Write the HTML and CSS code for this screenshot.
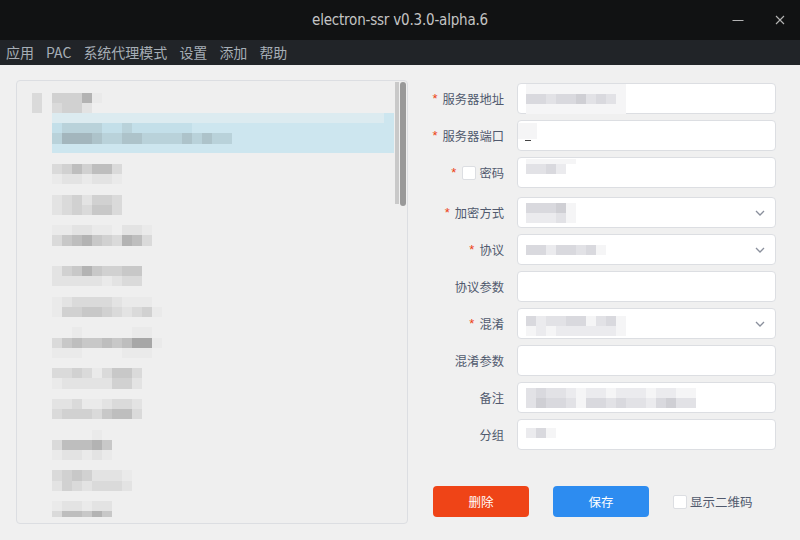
FILE: index.html
```html
<!DOCTYPE html>
<html lang="zh">
<head>
<meta charset="utf-8">
<title>electron-ssr v0.3.0-alpha.6</title>
<link rel="stylesheet" href="styles.css">
</head>
<body>
<header class="titlebar">
  <div></div>
  <div class="title">electron-ssr v0.3.0-alpha.6</div>
  <div class="winctl">
    <span class="wbtn"><svg width="12" height="12" viewBox="0 0 12 12"><line x1="0.5" y1="6.5" x2="11.5" y2="6.5" stroke="#b4b4b4" stroke-width="1"/></svg></span>
    <span class="wbtn close"><svg width="10" height="10" viewBox="0 0 10 10"><path d="M1 1L9 9M9 1L1 9" stroke="#b4b4b4" stroke-width="1.1"/></svg></span>
  </div>
</header>
<nav class="menubar">
  <span class="mi">应用</span><span class="mi">PAC</span><span class="mi">系统代理模式</span><span class="mi">设置</span><span class="mi">添加</span><span class="mi">帮助</span>
</nav>
<main class="main">
  <section class="panel">
    <div class="tree">
      <div class="node-root">
        <div class="mz"><div class="r"><i class="k3"></i></div><div class="r"><i class="k3"></i></div></div>
        <div class="mz"><div class="r"><i class="k4"></i><i class="k4"></i><i class="k4"></i><i class="k7"></i><i class="k1"></i></div><div class="r"><i class="k3"></i><i class="k4"></i><i class="k4"></i><i class="k2"></i></div></div>
      </div>
      <div class="children">
        <div class="selected">
          <div class="r sel-top"></div>
          <div class="r"><i class="b1"></i><i class="b2"></i><i class="b2"></i><i class="b2"></i><i class="b2"></i><i class="b1"></i><i class="b1"></i><i class="b2"></i><i class="b1"></i><i class="b1"></i><i class="b1"></i><i class="b1"></i><i class="b1"></i><i class="b1"></i><i class="b0"></i><i class="b0"></i><i class="b0"></i><i class="b0"></i></div>
          <div class="r"><i class="b2"></i><i class="b4"></i><i class="b4"></i><i class="b4"></i><i class="b3"></i><i class="b2"></i><i class="b2"></i><i class="b3"></i><i class="b3"></i><i class="b2"></i><i class="b2"></i><i class="b2"></i><i class="b2"></i><i class="b3"></i><i class="b2"></i><i class="b3"></i><i class="b2"></i><i class="b2"></i></div>
          <div class="r"></div>
        </div>
        <div class="items">
          <div class="mz"><div class="r"><i class="k3"></i><i class="k4"></i><i class="k6"></i><i class="k4"></i><i class="k6"></i><i class="k6"></i><i class="k3"></i></div><div class="r"><i class="k1"></i><i class="k2"></i><i class="k2"></i><i class="k1"></i><i class="k2"></i><i class="k2"></i><i class="k1"></i></div></div>
          <div class="mz"><div class="r"><i class="k2"></i><i class="k3"></i><i class="k4"></i><i class="k2"></i><i class="k4"></i><i class="k4"></i><i class="k3"></i></div><div class="r"><i class="k2"></i><i class="k3"></i><i class="k4"></i><i class="k3"></i><i class="k5"></i><i class="k5"></i><i class="k3"></i></div></div>
          <div class="mz"><div class="r"><i class="k1"></i><i class="k1"></i><i class="k2"></i><i class="k2"></i><i class="k1"></i><i class="k1"></i><i></i><i class="k2"></i><i class="k2"></i><i class="k1"></i></div><div class="r"><i class="k3"></i><i class="k5"></i><i class="k6"></i><i class="k7"></i><i class="k5"></i><i class="k4"></i><i class="k3"></i><i class="k7"></i><i class="k6"></i><i class="k3"></i></div></div>
          <div class="mz"><div class="r"></div><div class="r"><i class="k2"></i><i class="k4"></i><i class="k5"></i><i class="k7"></i><i class="k5"></i><i class="k4"></i><i class="k4"></i><i class="k5"></i><i class="k5"></i></div><div class="r"><i class="k2"></i><i class="k2"></i><i class="k2"></i><i class="k2"></i><i class="k2"></i><i class="k1"></i><i class="k2"></i><i class="k3"></i><i class="k3"></i></div></div>
          <div class="mz"><div class="r"><i class="k1"></i><i class="k2"></i><i class="k3"></i><i class="k3"></i><i class="k3"></i><i class="k3"></i><i class="k2"></i><i class="k1"></i><i class="k1"></i><i class="k1"></i></div><div class="r"><i class="k1"></i><i class="k4"></i><i class="k4"></i><i class="k5"></i><i class="k5"></i><i class="k4"></i><i class="k3"></i><i class="k2"></i><i class="k3"></i><i class="k4"></i><i class="k1"></i></div></div>
          <div class="mz"><div class="r"><i></i><i></i><i class="k1"></i><i></i><i></i><i></i><i></i><i></i><i class="k1"></i><i class="k1"></i></div><div class="r"><i class="k3"></i><i class="k5"></i><i class="k6"></i><i class="k5"></i><i class="k5"></i><i class="k6"></i><i class="k5"></i><i class="k6"></i><i class="k8"></i><i class="k8"></i><i class="k1"></i></div><div class="r"><i class="k1"></i><i class="k1"></i><i class="k1"></i><i></i><i></i><i></i><i></i><i class="k1"></i><i class="k1"></i><i class="k1"></i></div></div>
          <div class="mz"><div class="r"><i class="k3"></i><i class="k3"></i><i class="k4"></i><i class="k3"></i><i class="k1"></i><i class="k3"></i><i class="k5"></i><i class="k5"></i><i class="k3"></i></div><div class="r"><i class="k1"></i><i class="k2"></i><i class="k2"></i><i class="k2"></i><i class="k2"></i><i class="k2"></i><i class="k4"></i><i class="k4"></i><i class="k2"></i></div></div>
          <div class="mz"><div class="r"><i class="k2"></i><i class="k2"></i><i class="k3"></i><i class="k1"></i><i class="k1"></i><i class="k2"></i><i class="k3"></i><i class="k3"></i><i class="k2"></i></div><div class="r"><i class="k3"></i><i class="k4"></i><i class="k4"></i><i class="k4"></i><i class="k3"></i><i class="k5"></i><i class="k6"></i><i class="k6"></i><i class="k3"></i></div></div>
          <div class="mz"><div class="r"><i></i><i></i><i></i><i></i><i class="k1"></i></div><div class="r"><i class="k3"></i><i class="k6"></i><i class="k6"></i><i class="k6"></i><i class="k7"></i><i class="k5"></i></div><div class="r"><i class="k1"></i><i class="k2"></i><i class="k2"></i><i class="k1"></i><i class="k2"></i><i class="k1"></i></div></div>
          <div class="mz"><div class="r"><i class="k3"></i><i class="k4"></i><i class="k5"></i><i class="k4"></i><i class="k2"></i><i class="k2"></i><i class="k2"></i><i class="k1"></i></div><div class="r"><i class="k2"></i><i class="k4"></i><i class="k3"></i><i class="k2"></i><i class="k3"></i><i class="k3"></i><i class="k3"></i><i class="k2"></i></div></div>
          <div class="mz"><div class="r"><i class="k1"></i><i class="k2"></i><i class="k2"></i><i class="k1"></i><i class="k2"></i><i class="k2"></i></div><div class="r"><i class="k3"></i><i class="k6"></i><i class="k6"></i><i class="k5"></i><i class="k7"></i><i class="k5"></i></div></div>
        </div>
      </div>
    </div>
    <div class="scroll">
      <div class="track"></div>
      <div class="thumb"></div>
    </div>
  </section>

  <form class="form">
    <div class="row">
      <label class="lbl"><span class="req">*</span>服务器地址</label>
      <div class="inp"><div class="mz"><div class="r"><i class="w1"></i><i class="w1"></i><i class="w1"></i><i class="w1"></i><i class="w1"></i><i class="w1"></i><i class="w1"></i><i class="w1"></i><i class="w1"></i><i class="w1"></i></div><div class="r"><i class="w4"></i><i class="w4"></i><i class="w3"></i><i class="w4"></i><i class="w4"></i><i class="w5"></i><i class="w3"></i><i class="w4"></i><i class="w3"></i><i class="w1"></i></div><div class="r"><i class="w1"></i><i class="w1"></i><i class="w1"></i><i class="w1"></i><i class="w1"></i><i class="w1"></i><i class="w1"></i><i class="w1"></i><i class="w1"></i><i class="w1"></i></div></div></div>
    </div>
    <div class="row">
      <label class="lbl"><span class="req">*</span>服务器端口</label>
      <div class="inp port"><span class="port-val"><span class="cursor"></span></span></div>
    </div>
    <div class="row row-pw">
      <label class="lbl"><span class="req">*</span><span class="cb"></span>密码</label>
      <div class="inp"><div class="mz top"><div class="r thin"><i class="w1"></i><i class="w1"></i><i class="w1"></i><i class="w1"></i><i class="w1"></i></div><div class="r"><i class="w3"></i><i class="w3"></i><i class="w4"></i><i class="w2"></i></div></div></div>
    </div>
    <div class="row">
      <label class="lbl"><span class="req">*</span>加密方式</label>
      <div class="inp sel"><div class="mz"><div class="r"><i class="w4"></i><i class="w4"></i><i class="w4"></i><i class="w5"></i><i class="w1"></i></div><div class="r"><i class="w2"></i><i class="w2"></i><i class="w2"></i><i class="w3"></i><i class="w1"></i></div></div><svg class="arrow" width="10" height="6" viewBox="0 0 10 6"><path d="M1 1L5 5L9 1" fill="none" stroke="#8a8f9c" stroke-width="1.3"/></svg></div>
    </div>
    <div class="row">
      <label class="lbl"><span class="req">*</span>协议</label>
      <div class="inp sel"><div class="mz"><div class="r"><i class="w4"></i><i class="w4"></i><i class="w2"></i><i class="w4"></i><i class="w4"></i><i class="w3"></i><i class="w4"></i><i class="w1"></i></div></div><svg class="arrow" width="10" height="6" viewBox="0 0 10 6"><path d="M1 1L5 5L9 1" fill="none" stroke="#8a8f9c" stroke-width="1.3"/></svg></div>
    </div>
    <div class="row">
      <label class="lbl">协议参数</label>
      <div class="inp"></div>
    </div>
    <div class="row">
      <label class="lbl"><span class="req">*</span>混淆</label>
      <div class="inp sel"><div class="mz low"><div class="r"><i class="w4"></i><i class="w2"></i><i class="w3"></i><i class="w3"></i><i class="w4"></i><i class="w4"></i><i class="w1"></i><i class="w3"></i><i class="w4"></i><i class="w1"></i></div><div class="r"><i class="w1"></i><i class="w2"></i><i class="w1"></i><i class="w2"></i><i class="w2"></i><i class="w2"></i><i class="w2"></i><i class="w2"></i><i class="w2"></i><i class="w1"></i></div></div><svg class="arrow" width="10" height="6" viewBox="0 0 10 6"><path d="M1 1L5 5L9 1" fill="none" stroke="#8a8f9c" stroke-width="1.3"/></svg></div>
    </div>
    <div class="row">
      <label class="lbl">混淆参数</label>
      <div class="inp"></div>
    </div>
    <div class="row">
      <label class="lbl">备注</label>
      <div class="inp"><div class="mz"><div class="r"><i class="w3"></i><i class="w4"></i><i class="w3"></i><i class="w3"></i><i class="w2"></i><i class="w1"></i><i class="w2"></i><i class="w2"></i><i class="w1"></i><i class="w2"></i><i class="w2"></i><i class="w2"></i><i class="w1"></i><i class="w2"></i><i class="w2"></i><i class="w1"></i><i class="w1"></i></div><div class="r"><i class="w3"></i><i class="w5"></i><i class="w4"></i><i class="w4"></i><i class="w3"></i><i class="w1"></i><i class="w4"></i><i class="w4"></i><i class="w3"></i><i class="w4"></i><i class="w3"></i><i class="w3"></i><i class="w2"></i><i class="w4"></i><i class="w5"></i><i class="w3"></i><i class="w3"></i></div></div></div>
    </div>
    <div class="row">
      <label class="lbl">分组</label>
      <div class="inp"><div class="mz up"><div class="r"><i class="w2"></i><i class="w4"></i><i class="w1"></i></div></div></div>
    </div>
    <div class="actions">
      <button type="button" class="btn btn-del">删除</button>
      <button type="button" class="btn btn-save">保存</button>
      <label class="qr"><span class="cb"></span>显示二维码</label>
    </div>
  </form>
</main>
</body>
</html>
```
FILE: styles.css
```css
* { box-sizing: border-box; margin: 0; padding: 0; }
html, body { width: 800px; height: 540px; overflow: hidden; }
body {
  background: #f0f0f0;
  font-family: "Noto Sans", "Noto Sans CJK SC", sans-serif;
  color: #515a6e;
}

/* title bar */
.titlebar {
  height: 40px;
  background: #111213;
  display: grid;
  grid-template-columns: 1fr auto 1fr;
  align-items: center;
}
.title {
  color: #c4c4c4;
  font-size: 15px;
  font-family: "DejaVu Sans Condensed", "Liberation Sans Narrow", "Noto Sans", sans-serif;
  letter-spacing: -0.2px;
}
.winctl { justify-self: end; display: flex; height: 40px; }
.wbtn { width: 45px; height: 40px; display: flex; align-items: center; justify-content: center; }
.wbtn.close { width: 40px; }

/* menu */
.menubar {
  height: 25px;
  background: #212428;
  display: flex;
  align-items: center;
}
.mi {
  padding: 0 6px;
  color: #a6aeb6;
  font-size: 14px;
  line-height: 25px;
  font-family: "Noto Sans CJK SC", sans-serif;
}

/* main */
.main { display: flex; padding: 15px 0 0 16px; }

.panel {
  width: 392px;
  height: 444px;
  border: 1px solid #dcdee2;
  border-radius: 4px;
  background: #efefef;
  display: flex;
}
.tree {
  flex: 1;
  padding-top: 12px;
  margin-bottom: 6px;
  overflow: hidden;
}
.mz { display: flex; flex-direction: column; }
.r { display: flex; height: 10px; }
.r i { display: block; width: 10px; height: 10px; flex: none; }
.tree .r { height: 10.2px; }
.tree .r i { height: 10.2px; }

.k1 { background: #eaeaea; }
.k2 { background: #e3e3e3; }
.k3 { background: #dadada; }
.k4 { background: #d1d1d1; }
.k5 { background: #c8c8c8; }
.k6 { background: #bebebe; }
.k7 { background: #b3b3b3; }
.k8 { background: #a7a7a7; }

.node-root { display: flex; gap: 10px; padding-left: 15px; }
.children { padding-left: 35px; }

.selected { background: #cde6ef; }
.selected .r { height: 10px; }
.sel-top { background: #dcebf0; margin-right: 10px; }
.b0 { background: #cde6ef; }
.b1 { background: #c3dfe9; }
.b2 { background: #b9d2da; }
.b3 { background: #adc3ca; }
.b4 { background: #a3b6bd; }

.items { display: flex; flex-direction: column; gap: 10.3px; padding-top: 10.5px; }

.scroll { width: 13px; display: flex; padding-top: 1px; }
.track { width: 4px; height: 122px; background: #c9c9c9; margin-left: 1px; }
.thumb { width: 6px; height: 124px; background: #999999; border-radius: 3px; margin-left: 1px; }

/* form */
.form { margin-left: 15px; padding-top: 3px; }
.row {
  display: grid;
  grid-template-columns: 81px 259px;
  column-gap: 13px;
  height: 31px;
  margin-bottom: 6px;
  align-items: center;
}
.row-pw { margin-bottom: 9px; }
.lbl {
  display: flex;
  justify-content: flex-end;
  align-items: center;
  font-size: 12.3px;
  color: #515a6e;
  font-family: "Noto Sans CJK SC", sans-serif;
}
.req { color: #ed4014; margin-right: 5px; font-family: "Liberation Sans", sans-serif; font-size: 13px; }
.cb {
  width: 14px; height: 14px;
  border: 1px solid #dcdee2;
  border-radius: 2px;
  background: #fff;
  margin-right: 3px;
  display: inline-block;
}
.lbl .cb { margin-left: 1px; }

.inp {
  height: 31px;
  border: 1px solid #dcdee2;
  border-radius: 4px;
  background: #fff;
  display: flex;
  align-items: center;
  padding-left: 8px;
}
.inp.sel { justify-content: space-between; padding-right: 10px; }
.inp .r { height: 10px; }
.inp .r.thin { height: 5px; }
.inp .r.thin i { height: 5px; }
.mz.top { align-self: flex-start; margin-top: 1px; }
.mz.low { margin-top: 4px; }
.mz.up { margin-top: -3px; }
.w1 { background: #f5f5f6; }
.w2 { background: #ebebee; }
.w3 { background: #e2e2e6; }
.w4 { background: #d9d9de; }
.w5 { background: #cfcfd4; }

.port { padding-left: 0; align-items: flex-start; }
.port-val {
  width: 19px; height: 16px;
  background: #f5f5f6;
  margin-top: 2px;
  display: flex;
  align-items: flex-end;
}
.cursor { display: block; width: 6px; height: 1px; background: #444; margin-left: 7px; margin-bottom: -2px; }

.actions {
  display: flex;
  align-items: center;
  margin-top: 36px;
  padding-left: 10px;
}
.btn {
  width: 96px;
  height: 31px;
  border: none;
  border-radius: 4px;
  color: #fff;
  font-size: 12.5px;
  font-family: "Noto Sans CJK SC", sans-serif;
  margin-right: 24px;
}
.btn-del { background: #ef4417; }
.btn-save { background: #2d8cf0; }
.qr {
  display: flex; align-items: center;
  font-size: 12.5px;
  color: #515a6e;
  font-family: "Noto Sans CJK SC", sans-serif;
}
```
